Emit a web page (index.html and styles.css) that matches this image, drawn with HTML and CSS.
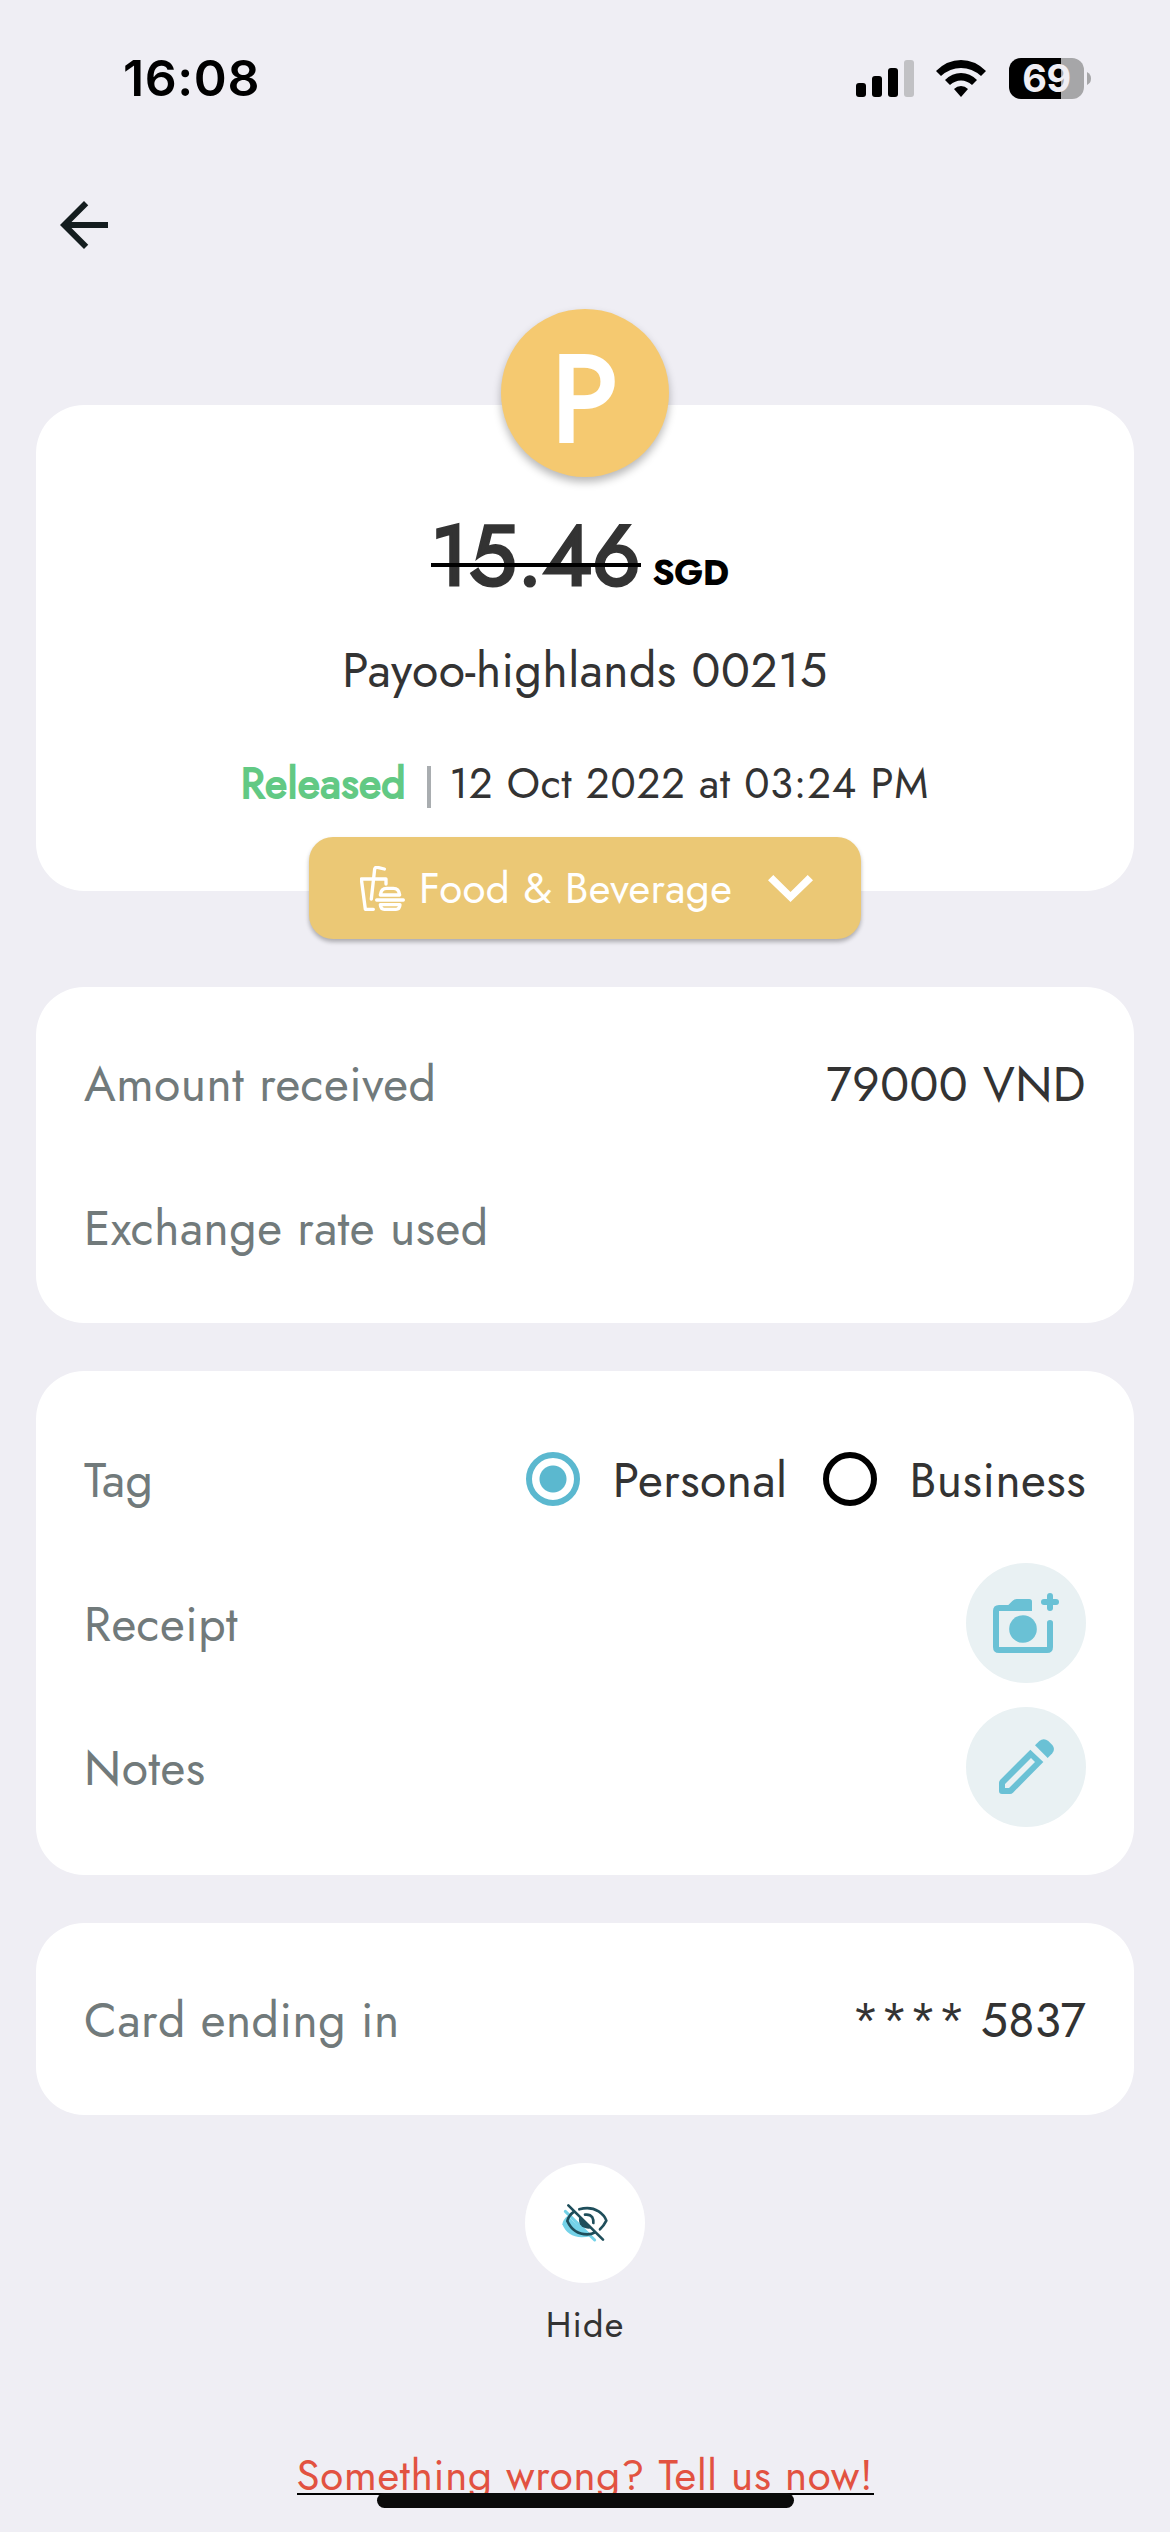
FILE: index.html
```html
<!DOCTYPE html>
<html lang="en">
<head>
<meta charset="utf-8">
<title>Transaction details</title>
<link rel="stylesheet" href="styles.css">
</head>
<body>
<div class="screen">
  <div class="status-bar">
    <span class="time">16:08</span>
    <div class="indicators">
      <svg class="signal" viewBox="0 0 58 37"><rect y="23" width="10" height="14" rx="3"/><rect x="16" y="16" width="10" height="21" rx="3"/><rect x="32" y="8" width="10" height="29" rx="3"/><rect x="48" width="10" height="37" rx="3" fill="#c1c1c4"/></svg>
      <svg class="wifi" viewBox="0 0 50 37"><path d="M0 11Q11 0 25 0T50 11L45 16Q36 8 25 8T5 16zM9 20Q16 13 25 13T41 20L36 25Q31 20.500 25 20.500T14 25zM18 29Q21 26 25 26T32 29L25 37z"/></svg>
      <div class="battery"><span>69</span></div>
      <svg class="battery-tip" viewBox="0 0 4 13"><path d="M0 0Q4 2 4 6.500T0 13z" fill="#a6a6a8"/></svg>
    </div>
  </div>
  <header class="nav">
    <svg class="back" viewBox="0 0 24 24"><path fill="#141d1f" d="M20 11H7.830l5.590-5.590L12 4l-8 8 8 8 1.410-1.410L7.830 13H20z"/></svg>
  </header>

  <main>
    <section class="card hero">
      <div class="avatar">P</div>
      <div class="amount"><span class="figure">15.46</span><span class="currency">SGD</span></div>
      <div class="merchant">Payoo-highlands 00215</div>
      <div class="state"><span class="released">Released</span><span class="divider"></span><span class="date">12 Oct 2022 at 03:24 PM</span></div>
      <div class="category">
        <svg class="food" viewBox="60 48 135 135" fill="none" stroke="#fff" stroke-width="10" stroke-linecap="round" stroke-linejoin="round"><path d="M138 102V87H64L76 178H100M94 147L104 57Q106 51 112 52L133 57"/><path d="M121 135Q123 115 140 115H160Q177 115 179 135zM110 150H190M121 164H180Q179 178 168 178H133Q122 178 121 164z"/></svg>
        <span>Food &amp; Beverage</span>
        <svg class="chevron" viewBox="0 0 45 27"><path fill="#fff" d="M5.300 0L22.500 17 39.700 0 45 5.300 22.500 27 0 5.300z"/></svg>
      </div>
    </section>

    <section class="card">
      <div class="row"><span class="label">Amount received</span><span>79000 VND</span></div>
      <div class="row"><span class="label">Exchange rate used</span></div>
    </section>

    <section class="card roomy">
      <div class="row">
        <span class="label">Tag</span>
        <div class="options">
          <span class="radio on"></span><span class="option">Personal</span>
          <span class="radio"></span><span class="option last">Business</span>
        </div>
      </div>
      <div class="row"><span class="label">Receipt</span>
        <svg class="action" viewBox="198 69 360 360"><circle cx="378" cy="249" r="180" fill="#e9f1f3"/><g fill="#6ac1d5"><path d="M297 195H325L337 183Q343 177 350 177H388Q396 177 396 185V213H297V321H441V248Q441 240 450 240T459 248V321Q459 339 441 339H297Q279 339 279 321V213Q279 195 297 195z"/><circle cx="369" cy="267" r="41.500"/><rect x="423" y="177" width="54" height="18" rx="9"/><rect x="441" y="159" width="18" height="54" rx="9"/></g></svg>
      </div>
      <div class="row"><span class="label">Notes</span>
        <svg class="action" viewBox="198 501 360 360"><circle cx="378" cy="681" r="180" fill="#e9f1f3"/><g fill="#6ac1d5"><path fill-rule="evenodd" d="M297 728Q297 723 301 719L391 629 430 666 339 758Q335 762 330 762H306Q297 762 297 753zM315 732V744H327L405 666 393 654z"/><path d="M405 616L418 603Q431 592 445 603L457 615Q467 628 457 640L443 654z"/></g></svg>
      </div>
    </section>

    <section class="card">
      <div class="row"><span class="label">Card ending in</span><span class="number">**** 5837</span></div>
    </section>

    <div class="hide">
      <svg class="eye" viewBox="135 69 360 360" fill="none" stroke-linecap="round" stroke-linejoin="round"><circle cx="315" cy="249" r="180" fill="#fff"/><path fill="#74d2e8" d="M262 228Q248 240 247 253Q262 291 305 292Q320 292 331 289z"/><path stroke="#74d2e8" stroke-width="9" d="M256 214L344 300"/><path fill="#1f4e5b" d="M299 229Q294 240 300 253Q309 266 325 266Q332 266 335 263z"/><g stroke="#1f4e5b" stroke-width="8"><path d="M283 214Q266 226 262 243Q280 283 322 283Q335 283 345 277M298 208Q330 198 356 214Q374 226 379 242Q371 258 360 268M315 224Q330 222 337 232Q341 239 340 249M265 196L369 299"/></g></svg>
      <span>Hide</span>
    </div>
    <a class="report">Something wrong? Tell us now!</a>
  </main>
  <div class="home-indicator"></div>
</div>
</body>
</html>
```
FILE: styles.css
```css
* { box-sizing: border-box; }
body { margin: 0; background: #efeef4; }
.screen {
  position: relative;
  width: 1170px;
  height: 2532px;
  overflow: hidden;
  background: #efeef4;
  color: #333;
  font-family: Jost, Lato, sans-serif;
  font-size: 48px;
  letter-spacing: .5px;
}
svg { display: block; flex: none; }

.status-bar {
  display: flex;
  justify-content: space-between;
  align-items: center;
  height: 156px;
  padding: 0 79px 0 123px;
  color: #000;
}
.time { font: 600 50px/60px Inter, sans-serif; letter-spacing: .6px; }
.indicators { display: flex; align-items: center; }
.signal { width: 58px; height: 37px; }
.wifi { width: 50px; height: 37px; margin: 0 23px 0 22px; }
.battery {
  width: 75px;
  height: 41px;
  border-radius: 12px;
  background: linear-gradient(90deg, #000 52px, #a6a6a8 52px);
  color: #efeef4;
  font: 700 38px/41px Inter, sans-serif;
  letter-spacing: -.5px;
  text-align: center;
}
.battery-tip { width: 4px; height: 13px; margin-left: 3px; }

.nav { padding: 33px 48px 0; }
.back { width: 72px; height: 72px; }

main {
  display: flex;
  flex-direction: column;
  gap: 48px;
  padding: 144px 36px 0;
}
.card { padding: 24px 48px; border-radius: 48px; background: #fff; }
.roomy { padding: 36px 48px; }

.hero {
  display: flex;
  flex-direction: column;
  align-items: center;
  height: 486px;
  margin-bottom: 48px;
  padding: 0;
}
.avatar {
  flex: none;
  width: 168px;
  height: 168px;
  margin-top: -96px;
  border-radius: 50%;
  background: #f5c970;
  box-shadow: 0 5px 8px rgba(0, 0, 0, .28);
  color: #fff;
  font-size: 120px;
  line-height: 182px;
  text-align: center;
  -webkit-text-stroke: 4px #fff;
}
.amount {
  display: flex;
  align-items: baseline;
  gap: 11px;
  width: 308px;
  height: 96px;
  margin-top: 31px;
}
.figure {
  position: relative;
  font-size: 84px;
  line-height: 96px;
  -webkit-text-stroke: 3px #333;
}
.figure::after {
  content: "";
  position: absolute;
  left: 0;
  top: 55px;
  width: 100%;
  height: 4px;
  background: #000;
}
.currency { color: #000; font-weight: 700; font-size: 36px; line-height: 40px; letter-spacing: -.7px; }
.merchant { margin-top: 37px; line-height: 60px; }
.state {
  display: flex;
  align-items: center;
  margin-top: 53px;
  font-size: 42px;
  line-height: 60px;
  letter-spacing: .75px;
}
.released { color: #62c984; -webkit-text-stroke: 2px #62c984; }
.divider { width: 4px; height: 42px; margin: 5px 18px 0 21px; background: #a9adb0; }
.category {
  display: flex;
  align-items: center;
  flex: none;
  width: 552px;
  height: 102px;
  margin-top: 23px;
  padding: 0 48px 0 51px;
  border-radius: 24px;
  background: #ebc875;
  box-shadow: 0 3px 4px rgba(0, 0, 0, .28);
  color: #fff;
  font-size: 42px;
  line-height: 60px;
  letter-spacing: .4px;
}
.category span { margin: 2px auto 0 14px; }
.food { width: 45px; height: 45px; }
.chevron { width: 45px; height: 27px; }

.row {
  display: flex;
  justify-content: space-between;
  align-items: center;
  height: 144px;
  line-height: 60px;
}
.row > span, .option { padding-top: 3px; }
.label { color: #717a7b; }
.number { letter-spacing: .3px; }
.options { display: flex; align-items: center; }
.radio {
  width: 54px;
  height: 54px;
  border: 6px solid #000;
  border-radius: 50%;
}
.on {
  border-color: #5bb8cf;
  background: radial-gradient(circle, #5bb8cf 13px, transparent 14px);
}
.option { margin: 0 35px 0 33px; }
.last { margin-right: 0; }
.action { width: 120px; height: 120px; }

.hide {
  display: flex;
  flex-direction: column;
  align-items: center;
  gap: 17px;
  font-size: 36px;
  line-height: 48px;
  letter-spacing: 1.1px;
}
.eye { width: 120px; height: 120px; }
.report {
  align-self: center;
  width: 577px;
  height: 49px;
  margin-top: 50px;
  border-bottom: 2px solid #000;
  color: #e25241;
  font-size: 42px;
  line-height: 60px;
  letter-spacing: .75px;
  white-space: nowrap;
}
.home-indicator {
  position: absolute;
  left: 377px;
  bottom: 24px;
  width: 417px;
  height: 15px;
  border-radius: 8px;
  background: #0a0a0a;
}
```
